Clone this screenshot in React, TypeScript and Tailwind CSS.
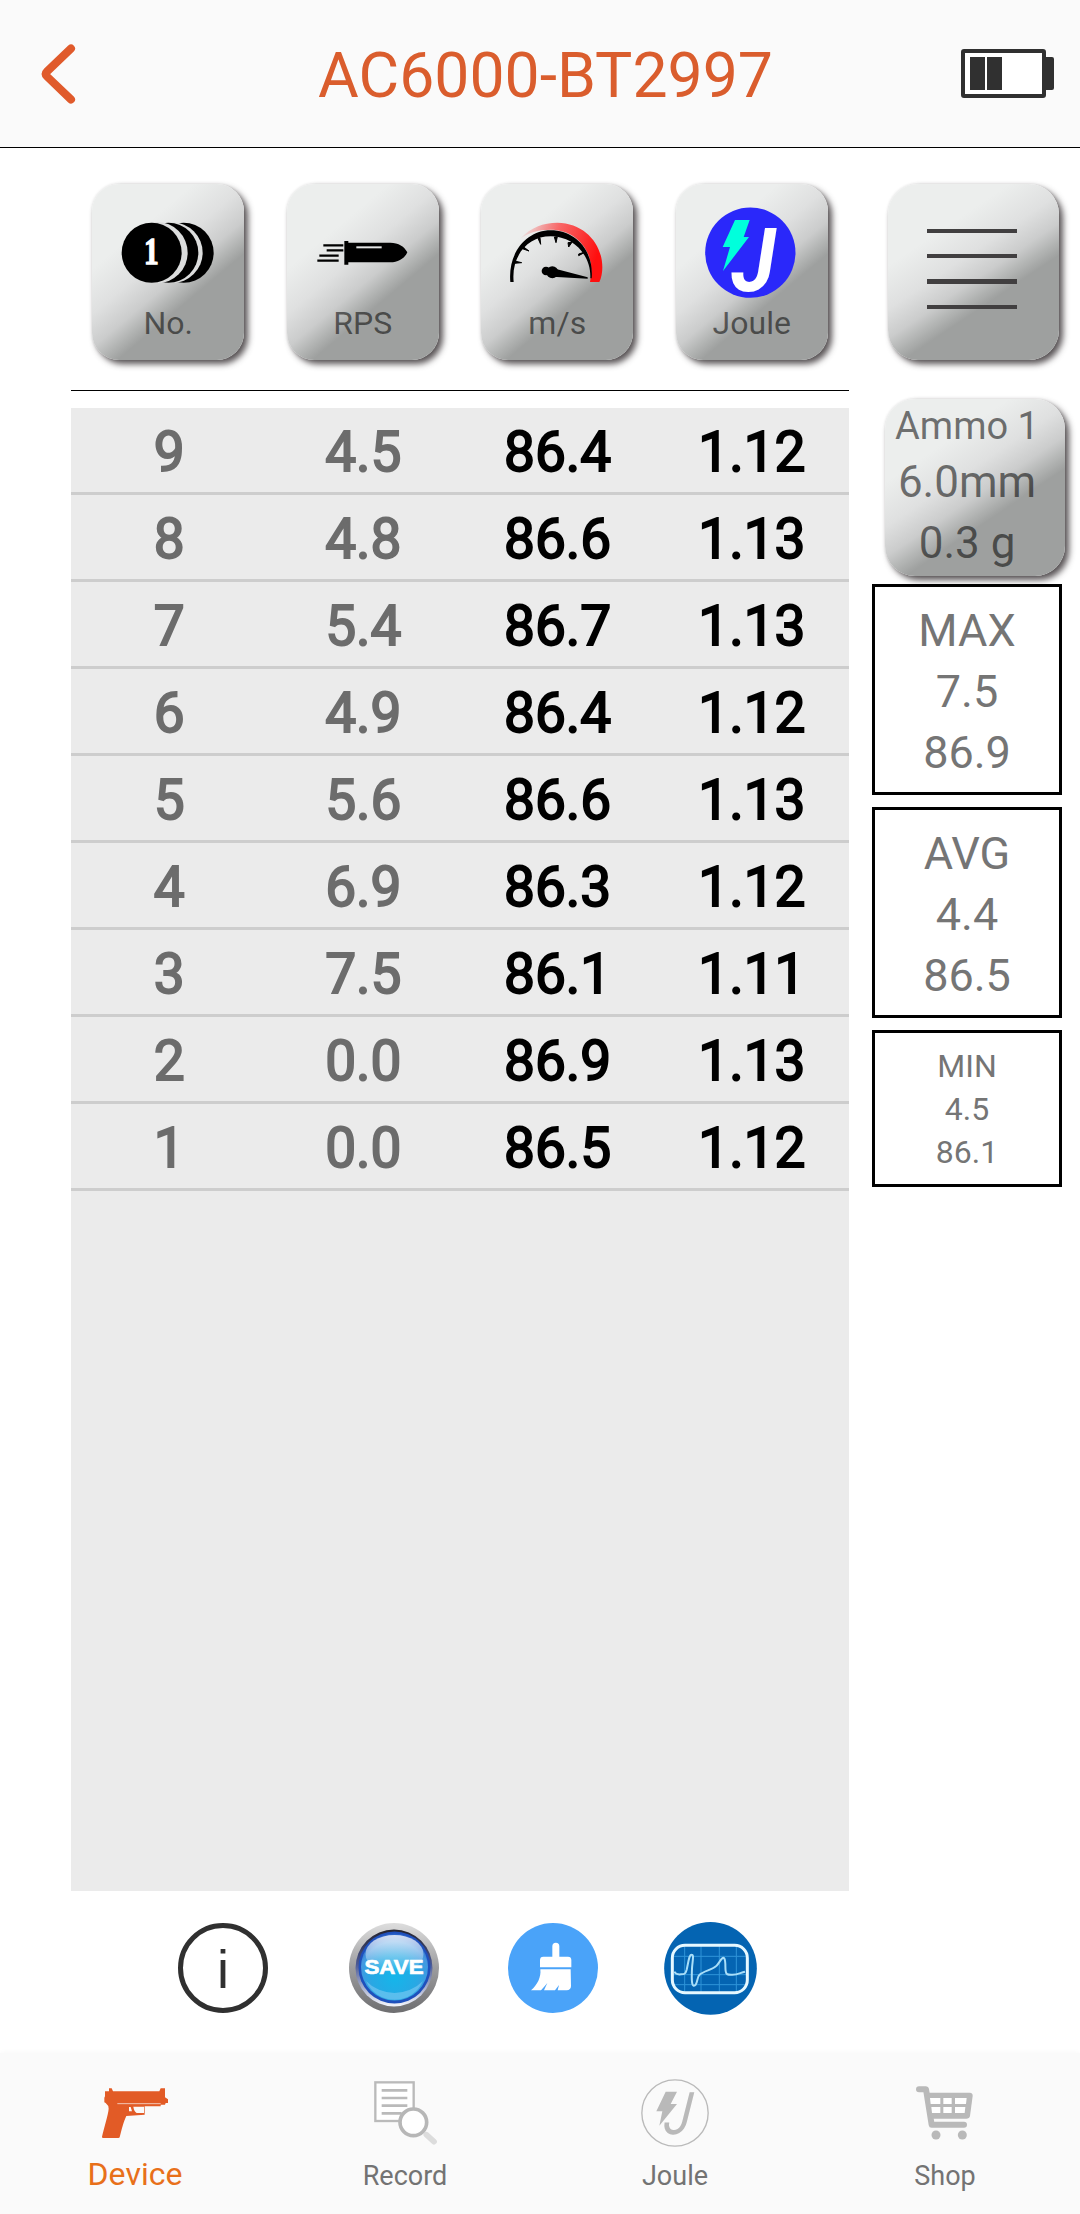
import React from 'react';

interface Shot {
    no: number;
    rps: string;
    speed: string;
    joule: string;
}

const SHOTS: Shot[] = [
    { no: 9, rps: '4.5', speed: '86.4', joule: '1.12' },
    { no: 8, rps: '4.8', speed: '86.6', joule: '1.13' },
    { no: 7, rps: '5.4', speed: '86.7', joule: '1.13' },
    { no: 6, rps: '4.9', speed: '86.4', joule: '1.12' },
    { no: 5, rps: '5.6', speed: '86.6', joule: '1.13' },
    { no: 4, rps: '6.9', speed: '86.3', joule: '1.12' },
    { no: 3, rps: '7.5', speed: '86.1', joule: '1.11' },
    { no: 2, rps: '0.0', speed: '86.9', joule: '1.13' },
    { no: 1, rps: '0.0', speed: '86.5', joule: '1.12' },
];

const TILE_SHADOW = 'shadow-[4px_4px_6px_rgba(60,54,56,0.85),0_0_3px_rgba(0,0,0,0.12)]';
const TILE_BG = 'bg-[linear-gradient(140deg,#eceeed_0%,#eceeed_28%,#dfe0e0_43%,#cbcccc_54%,#b2b4b3_60%,#9ea09f_65%)]';
const WIDE_TILE_BG = 'bg-[linear-gradient(146deg,#eceeed_0%,#eceeed_28%,#dfe0e0_43%,#cbcccc_53%,#b2b4b3_59%,#9ea09f_64%)]';

const CoinsIcon = () => (
    <svg className="w-full h-[120px]" viewBox="97 42 456 360">
        <circle cx="372" cy="248" r="90" />
        <circle cx="338" cy="248" r="91" fill="#dcdddd" />
        <circle cx="326" cy="248" r="90" />
        <circle cx="292" cy="248" r="92" fill="#dcdddd" />
        <circle cx="276" cy="248" r="90" />
        <text x="275" y="282" textAnchor="middle" fill="#fff" stroke="#fff" strokeWidth="4" fontFamily="Liberation Serif, serif" fontWeight="700" fontSize="115" textLength="44" lengthAdjust="spacingAndGlyphs">1</text>
    </svg>
);

const BulletIcon = () => (
    <svg className="w-full h-[120px]" viewBox="680 42 456 360">
        <path d="M789 226h60M799 241h50M777 257h58M771 272h64" stroke="#000" strokeWidth="7" />
        <path d="M852 213h12v5h126c24 0 43 12 51 29c-8 18-27 30-51 30H864v7h-12z" />
        <path d="M888 232h76" stroke="#e4e5e5" strokeWidth="6" />
    </svg>
);

const GaugeIcon = () => (
    <svg className="w-full h-[120px]" viewBox="93 42 456 360">
        <defs>
            <linearGradient id="heat" x1="210" y1="185" x2="440" y2="260" gradientUnits="userSpaceOnUse">
                <stop offset="0" stopColor="#ff2020" stopOpacity="0" />
                <stop offset="0.45" stopColor="#ff3a3a" stopOpacity="0.75" />
                <stop offset="1" stopColor="#ff0f0f" />
            </linearGradient>
        </defs>
        <path d="M212 205C242 172 280 158 322 158C405 160 457 222 457 292Q457 318 448 336H420Q430 294 416 256C396 206 352 179 302 179C262 179 236 188 212 205z" fill="url(#heat)" />
        <path d="M181 336C173 248 230 181 302 181C377 181 432 242 425 325H421C424 254 369 199 302 199C234 199 183 257 191 336z" />
        <path d="M194 273l21 5l-22 2zM221 231l16 12l-20-7zM264 205l8 18l-2-20zM313 201l5 17l4-18zM354 218l2 13l10-14zM386 257l22-12l-22 7z" stroke="#000" strokeWidth="3" />
        <circle cx="288" cy="303" r="13" />
        <circle cx="307" cy="307" r="18" />
        <path d="M307 294L413 322V326L307 320z" />
    </svg>
);

const JouleIcon = () => (
    <svg className="w-full h-[120px] overflow-visible" viewBox="680 42 456 360">
        <circle cx="903" cy="248" r="135.500" fill="#2a28fa" />
        <path d="M857 150h44l-18 51h16l-78 102l21-72h-22z" fill="#00ffdc" />
        <text transform="translate(846 364) scale(0.93 1)" fill="#fff" fontFamily="Roboto, sans-serif" fontStyle="italic" fontWeight="700" fontSize="264">J</text>
    </svg>
);

const InfoIcon = () => (
    <svg className="w-[90px] h-[90px]" viewBox="0 0 90 90">
        <circle cx="45" cy="45" r="42.500" fill="#fff" stroke="#303030" strokeWidth="5" />
        <text x="45" y="64.500" textAnchor="middle" fill="#303030" fontFamily="Liberation Sans, sans-serif" fontSize="54">i</text>
    </svg>
);

const SaveIcon = () => (
    <svg className="w-[90px] h-[90px]" viewBox="0 0 90 90">
        <defs>
            <linearGradient id="rim" x1="0" y1="0" x2="0" y2="1">
                <stop offset="0" stopColor="#dedede" />
                <stop offset="0.5" stopColor="#9c9c9e" />
                <stop offset="1" stopColor="#6e6e70" />
            </linearGradient>
            <linearGradient id="groove" x1="0" y1="0" x2="0" y2="1">
                <stop offset="0" stopColor="#24222c" />
                <stop offset="0.45" stopColor="#4a5894" />
                <stop offset="1" stopColor="#f4f6fc" />
            </linearGradient>
            <radialGradient id="ball" cx="0.5" cy="0.65" r="0.62">
                <stop offset="0" stopColor="#14b6ea" />
                <stop offset="0.55" stopColor="#28a8e4" />
                <stop offset="0.85" stopColor="#4597e0" />
                <stop offset="1" stopColor="#2a62c8" />
            </radialGradient>
            <linearGradient id="gloss" x1="0" y1="0" x2="0" y2="1">
                <stop offset="0" stopColor="#fff" stopOpacity="0.8" />
                <stop offset="1" stopColor="#fff" stopOpacity="0" />
            </linearGradient>
        </defs>
        <circle cx="45" cy="45" r="45" fill="url(#rim)" />
        <circle cx="45" cy="45" r="38.500" fill="url(#groove)" />
        <circle cx="45.500" cy="44.500" r="36" fill="#1f50bc" />
        <circle cx="45.500" cy="44" r="33.500" fill="url(#ball)" />
        <ellipse cx="45.500" cy="31" rx="29" ry="19" fill="url(#gloss)" />
        <path d="M17 58a31 31 0 0 0 57 0a40 40 0 0 1-57 0z" fill="#8fd2f6" fillOpacity="0.5" />
        <text x="45" y="51" textAnchor="middle" fill="#fff" stroke="#fff" strokeWidth="0.700" fontFamily="Liberation Sans, sans-serif" fontWeight="700" fontSize="20.500" textLength="59" lengthAdjust="spacingAndGlyphs">SAVE</text>
    </svg>
);

const BrushIcon = () => (
    <svg className="w-[90px] h-[90px]" viewBox="83 129 270 270">
        <circle cx="218" cy="264" r="135" fill="#4aa3f9" />
        <path d="M179 262v-22q0-10 10-10h27v-31a10 10 0 0 1 21 0v31h26q10 0 10 10v22z" fill="#fff" />
        <path d="M180 268h91l1 50q0 12-13 13h-27l4-16l-12 16h-33l10-22q-9 11-19 22h-30c19-16 31-40 28-63z" fill="#fff" />
    </svg>
);

const ScopeIcon = () => (
    <svg className="w-[93px] h-[93px]" viewBox="552 126 279 279">
        <circle cx="691.500" cy="265" r="139" fill="#0464b2" />
        <path d="M580 229h220M580 284h220M580 314h220M614 198v138M663 198v138M718 198v138M769 198v138" stroke="#2f93d8" strokeWidth="3" />
        <rect x="577" y="196" width="225" height="142" rx="38" fill="none" stroke="#e6f8ff" strokeWidth="9" />
        <path d="M583 275c4 8 12 9 20 8c10 0 13 0 17-14c5-20 7-46 15-45c8 0 2 20 1 42c-1 24-2 49 5 51c12 2 9-25 17-32c15-14 38-14 52-28c10-12 17-28 23-22c5 10 2 28 4 38c1 12 8 11 20 11c16 0 22-5 38-9" fill="none" stroke="#a9def8" strokeWidth="6" strokeLinejoin="round" />
    </svg>
);

const GunIcon = () => (
    <svg className="w-[66px] h-[50px]" viewBox="126 128 198 150">
        <path d="M147 129h8l4 9h139l4-9h13v27l9 6v11h-7l-2 5h-13v5h-48v25l-55 4c-8 16-14 41-20 64q-1 2-4 2h-46q-3 0-3-4c6-26 19-68 20-84q0-10-9-17l-4-2v-14l2-4v-15h12z" fill="#e25b26" />
        <path d="M172 175h130" stroke="#fafafa" strokeWidth="2" />
        <path d="M207 185h5l4 13h-9zM220 184h32v19h-22q-8-5-10-19z" fill="#fafafa" />
    </svg>
);

const RecordIcon = () => (
    <svg className="w-[63px] h-[64px]" viewBox="940 122 189 192">
        <rect x="944" y="126" width="115" height="116" fill="#fff" stroke="#bababa" strokeWidth="7" />
        <path d="M963 150h77M963 173h77M963 196h77M963 219h60" stroke="#bababa" strokeWidth="8" />
        <path d="M1097 283L1120 304" stroke="#dcdcdc" strokeWidth="17" strokeLinecap="round" />
        <circle cx="1058" cy="246" r="40" fill="#fff" stroke="#b7b7b7" strokeWidth="11" />
    </svg>
);

const JouleTabIcon = () => (
    <svg className="w-[68px] h-[68px]" viewBox="123 117 204 204">
        <circle cx="225" cy="219" r="99.500" fill="none" stroke="#bababa" strokeWidth="4" />
        <path d="M197 155h34l-19 37h19l-53 65l9-43h-18z" fill="#b9b9b9" />
        <text transform="translate(189 281) skewX(-6) scale(0.86 1)" fill="#b9b9b9" fontFamily="Roboto, sans-serif" fontStyle="italic" fontSize="176">J</text>
    </svg>
);

const CartIcon = () => (
    <svg className="w-[58px] h-[54px]" viewBox="950 138 174 162">
        <path d="M959 148h21l17 106h97" fill="none" stroke="#b9b9b9" strokeWidth="18" strokeLinecap="round" strokeLinejoin="round" />
        <path d="M984 158h127q10 1 9 10l-8 60q-2 8-11 8H996z" fill="#b9b9b9" />
        <path d="M992 174h31v18h-29zM1032 174h25v18h-25zM1067 174h35l-2 18h-33zM996 201h27v18h-25zM1032 201h25v18h-25zM1067 201h31l-2 18h-29z" fill="#fff" />
        <circle cx="1010" cy="285" r="13.500" fill="#b9b9b9" />
        <circle cx="1089" cy="285" r="13.500" fill="#b9b9b9" />
    </svg>
);

const COLUMNS = [
    { label: 'No.', icon: <CoinsIcon /> },
    { label: 'RPS', icon: <BulletIcon /> },
    { label: 'm/s', icon: <GaugeIcon /> },
    { label: 'Joule', icon: <JouleIcon /> },
];

const TABS = [
    { label: 'Device', icon: <GunIcon /> },
    { label: 'Record', icon: <RecordIcon /> },
    { label: 'Joule', icon: <JouleTabIcon /> },
    { label: 'Shop', icon: <CartIcon /> },
];

const Header = () => (
    <header className="flex items-center justify-between h-[148px] pl-[41px] pr-[26px] bg-[#fafafa] border-b border-black">
        <svg className="w-[93px] h-[60px]" viewBox="0 0 93 60">
            <path d="M30 4.500L6 27.500Q3.500 30 6 32.500L30 55.500" fill="none" stroke="#e05a2b" strokeWidth="8" strokeLinecap="round" />
        </svg>
        <h1 className="pt-1 pr-[4px] text-[62.5px] leading-[74px] text-[#da5d2d]">AC6000-BT2997</h1>
        <svg className="w-[93px] h-[49px]" viewBox="0 0 93 49">
            <rect x="2" y="2" width="81" height="45" rx="1" fill="#fff" stroke="#303030" strokeWidth="4" />
            <path d="M9 8h15v33H9zM26 8h15v33H26zM84 8h7q2 0 2 2v29q0 2-2 2h-7z" fill="#303030" />
        </svg>
    </header>
);

const StatBox: React.FC<{ lines: string[]; small?: boolean }> = ({ lines, small }) => (
    <div
        className={`flex flex-col items-center justify-center w-[190px] border-[3px] border-black bg-white text-[#757575] ${
            small ? 'h-[157px] text-[32px] leading-[43px] pt-[2px]' : 'h-[211px] text-[45px] leading-[61px] pt-[3px]'
        }`}
    >
        {lines.map(line => (
            <div key={line}>{line}</div>
        ))}
    </div>
);

const App: React.FC = () => {
    return (
        <div className="flex flex-col w-[1080px] h-[2214px] bg-white font-[Roboto,sans-serif] overflow-hidden">
            <Header />

            <main className="flex flex-1 pl-[71px] pt-9">
                <section className="w-[778px]">
                    <div className="grid grid-cols-4 h-[207px] border-b border-black">
                        {COLUMNS.map(column => (
                            <button
                                key={column.label}
                                className={`flex flex-col items-center justify-self-center w-[152px] h-[176px] rounded-[27px] ${TILE_BG} ${TILE_SHADOW}`}
                            >
                                {column.icon}
                                <span className="text-[32px] leading-[38px] text-black/55">{column.label}</span>
                            </button>
                        ))}
                    </div>

                    <div className="h-[1483px] mt-[17px] bg-[#ebebeb]">
                        {SHOTS.map(shot => (
                            <div
                                key={shot.no}
                                className="grid grid-cols-4 items-center h-[87px] pt-[3px] pl-px border-b-[3px] border-[#cdcdcd] text-center text-[55px] leading-[68px] text-black [-webkit-text-stroke-width:1.9px]"
                            >
                                <span className="text-[#6c6c6c]">{shot.no}</span>
                                <span className="text-[#6c6c6c]">{shot.rps}</span>
                                <span>{shot.speed}</span>
                                <span>{shot.joule}</span>
                            </div>
                        ))}
                    </div>

                    <div className="flex items-center h-[154px] pl-[107px]">
                        <InfoIcon />
                        <div className="ml-[81px]"><SaveIcon /></div>
                        <div className="ml-[69px]"><BrushIcon /></div>
                        <div className="ml-[66px]"><ScopeIcon /></div>
                    </div>
                </section>

                <aside className="flex flex-col w-[208px] ml-[23px]">
                    <button className={`flex flex-col items-center gap-[21px] w-[171px] h-[176px] ml-4 pt-[45px] pr-[3px] rounded-[30px] ${WIDE_TILE_BG} ${TILE_SHADOW}`}>
                        <span className="w-[90px] h-1 bg-[#413f40]" />
                        <span className="w-[90px] h-1 bg-[#413f40]" />
                        <span className="w-[90px] h-[5px] bg-[#413f40]" />
                        <span className="w-[90px] h-1 bg-[#413f40]" />
                    </button>

                    <button className={`flex flex-col items-center w-[180px] h-[177px] ml-[13px] mt-[39px] pt-px pr-[16px] rounded-[30px] text-black/55 ${WIDE_TILE_BG} ${TILE_SHADOW}`}>
                        <span className="text-[38px] leading-[52px]">Ammo 1</span>
                        <span className="text-[44px] leading-[61px]">6.0mm</span>
                        <span className="text-[44px] leading-[61px]">0.3 g</span>
                    </button>

                    <div className="flex flex-col gap-3 mt-2">
                        <StatBox lines={['MAX', '7.5', '86.9']} />
                        <StatBox lines={['AVG', '4.4', '86.5']} />
                        <StatBox lines={['MIN', '4.5', '86.1']} small />
                    </div>
                </aside>
            </main>

            <nav className="grid grid-cols-4 h-[161px] bg-[#fafafa] shadow-[0_0_6px_rgba(0,0,0,0.04)]">
                {TABS.map((tab, index) => (
                    <a key={tab.label} className="flex flex-col items-center pt-[22px]">
                        <div className="flex items-center justify-center h-[76px]">{tab.icon}</div>
                        {index === 0 ? (
                            <span className="mt-[4px] text-[32px] leading-[38px] text-[#e8701a]">{tab.label}</span>
                        ) : (
                            <span className="mt-[9px] text-[27px] leading-[32px] text-[#737373]">{tab.label}</span>
                        )}
                    </a>
                ))}
            </nav>
        </div>
    );
};

export default App;
